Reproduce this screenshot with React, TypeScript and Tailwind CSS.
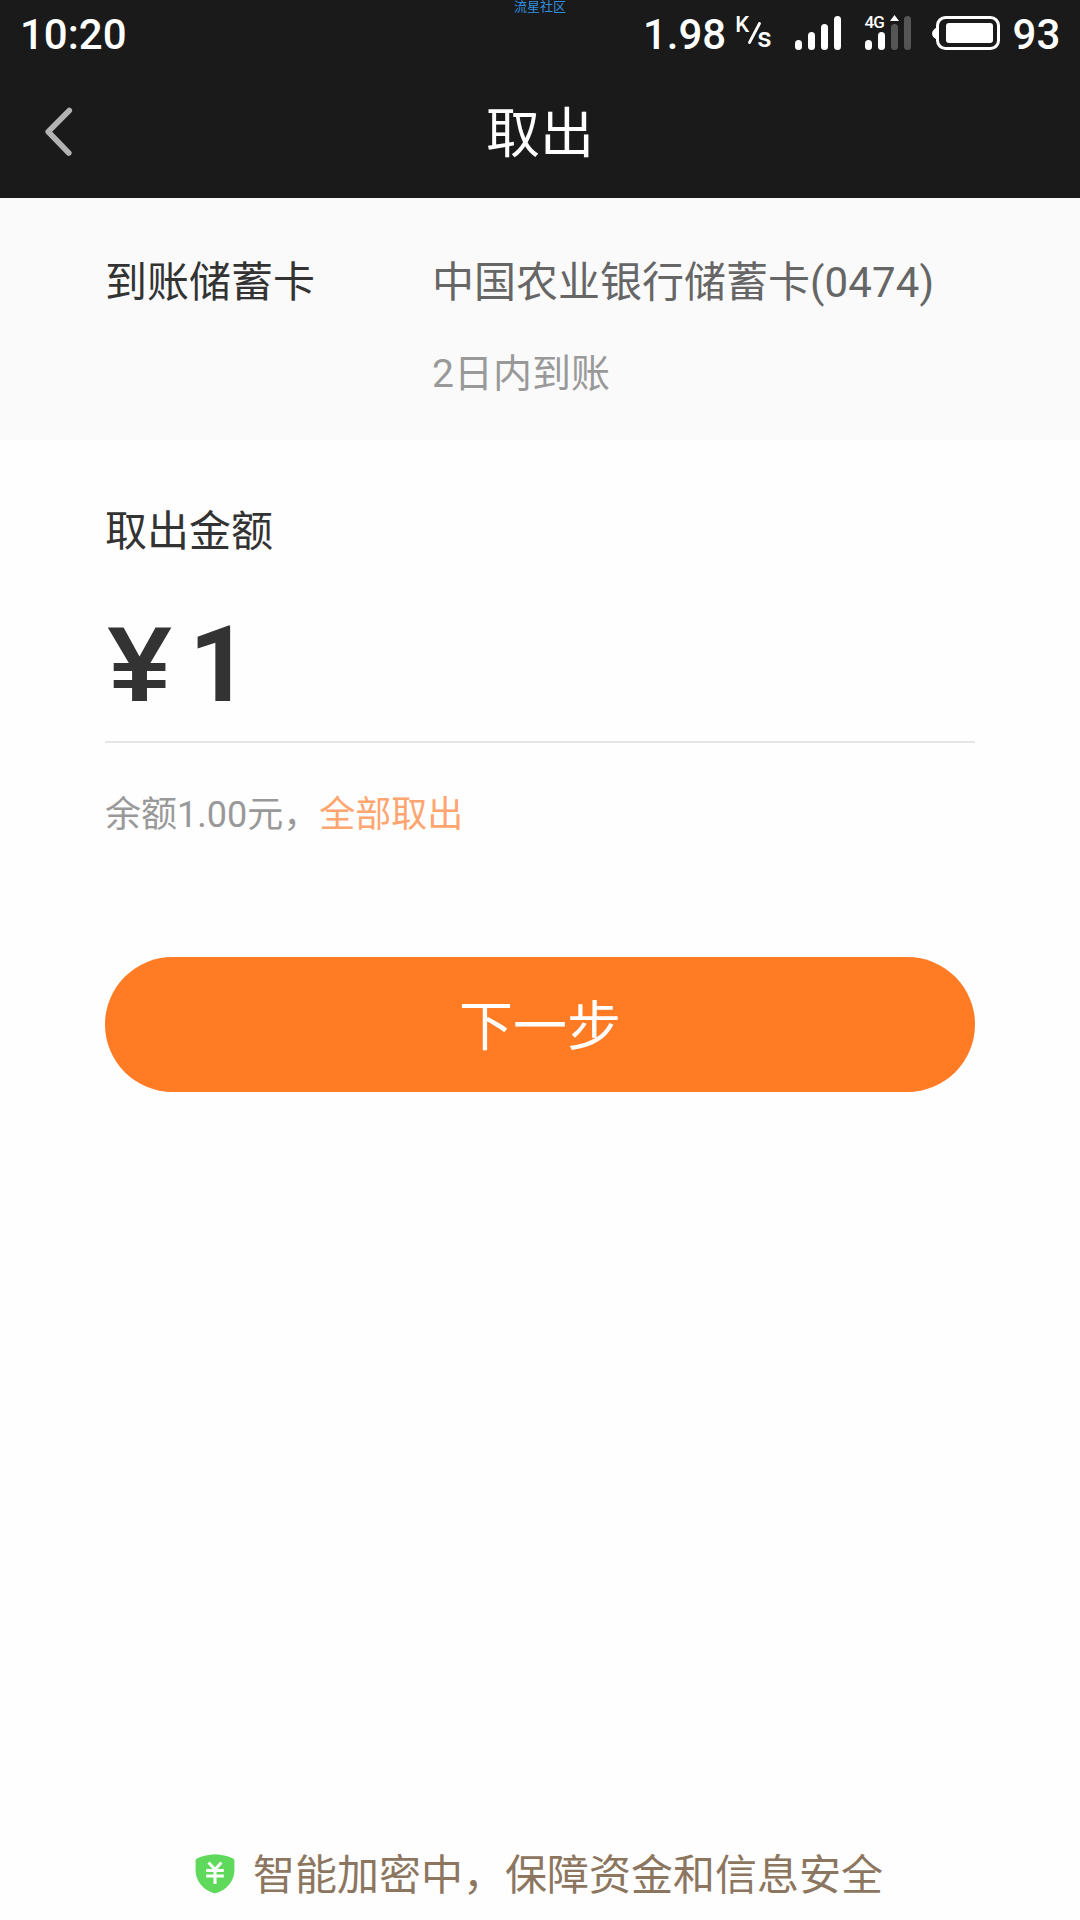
import React from 'react';

type IconProps = { className?: string };

// Four rounded bars, the second SIM only has two of them lit
const SignalBars: React.FC<IconProps & { lit: number }> = ({ className, lit }) => {
  const bars = [
    { x: 0, height: 10 },
    { x: 13, height: 18 },
    { x: 26, height: 26 },
    { x: 39, height: 34 },
  ];

  return (
    <svg className={className} width="47" height="34" viewBox="0 0 47 34">
      {bars.map((bar, index) => (
        <rect
          key={bar.x}
          x={bar.x}
          y={34 - bar.height}
          width="7"
          height={bar.height}
          rx="3.5"
          fill={index < lit ? '#ffffff' : '#555555'}
        />
      ))}
    </svg>
  );
};

const BatteryIcon: React.FC<IconProps> = ({ className }) => (
  <svg className={className} width="68" height="34" viewBox="0 0 68 34">
    <path d="M4.5 11.5C2 13 0 15 0 17.5S2 22 4.5 23.5Z" fill="#ffffff" />
    <rect x="5.5" y="1.5" width="61" height="31" rx="8" fill="none" stroke="#ffffff" strokeWidth="3" />
    <rect x="14" y="7" width="47" height="20" rx="3" fill="#ffffff" />
  </svg>
);

const BackIcon: React.FC<IconProps> = ({ className }) => (
  <svg className={className} width="28" height="50" viewBox="0 0 28 50">
    <path
      d="M24.3 3.5L3.2 24.7L23.8 46"
      fill="none"
      stroke="#b3b3b3"
      strokeWidth="5.6"
      strokeLinecap="round"
      strokeLinejoin="round"
    />
  </svg>
);

const ShieldIcon: React.FC<IconProps> = ({ className }) => (
  <svg className={className} width="40" height="40" viewBox="0 0 40 40">
    <path
      d="M20 0.3C26 0.5 33 2 38 4.6C39 5.2 39.4 6 39.4 7V17C39 28 31.5 35.5 21.5 39C20.4 39.4 19.4 39.4 18.3 39C8.5 35.5 1 28 0.6 17V7C0.6 6 1 5.2 2 4.6C7 2 14 0.5 20 0.3Z"
      fill="#5fd95c"
    />
    <path
      d="M13.6 8.6L20 15.6L26.4 8.6M11.2 16.6H28.8M11.2 22H28.8M20 15.6V30"
      fill="none"
      stroke="#ffffff"
      strokeWidth="3"
    />
  </svg>
);

const StatusBar: React.FC = () => (
  <div className="relative flex h-[66px] items-start font-[Roboto,sans-serif] text-[42px] font-medium leading-[70px] text-white">
    <span className="ml-5">10:20</span>
    <span className="absolute inset-x-0 top-0 text-center font-['Noto_Sans_CJK_SC',sans-serif] text-[13px] font-normal leading-[12px] text-[#2f8fdf]">
      流星社区
    </span>
    <div className="ml-auto flex items-start">
      <span>1.98</span>
      <span className="ml-[9px] mt-[14px] flex text-[22px] leading-[22px]">
        <span>K</span>
        <svg className="-ml-px mt-[8px]" width="13" height="22" viewBox="0 0 13 22">
          <path d="M11.5 1.5L1.5 20.5" stroke="#ffffff" strokeWidth="2.8" strokeLinecap="round" />
        </svg>
        <span className="-ml-1 mt-[13px] text-[28px]">s</span>
      </span>
      <SignalBars className="ml-[23px] mt-4" lit={4} />
      <div className="relative ml-[23px] mt-4">
        <SignalBars lit={2} />
        <span className="absolute left-0 -top-px text-[17px] leading-[14px] tracking-[-1px]">4G</span>
        <svg className="absolute -top-px left-[25px]" width="9" height="6" viewBox="0 0 9 6">
          <path d="M4.5 0L9 6H0Z" fill="#ffffff" />
        </svg>
      </div>
      <BatteryIcon className="ml-5 mt-4" />
      <span className="ml-[13px] mr-[19.7px]">93</span>
    </div>
  </div>
);

const NavBar: React.FC = () => (
  <div className="relative flex h-[132px] items-center justify-center pt-[6px]">
    <button type="button" className="absolute left-[45px] top-[41px]" aria-label="返回">
      <BackIcon />
    </button>
    <h1 className="text-[54px] leading-[54px] text-white">取出</h1>
  </div>
);

const CardInfo: React.FC = () => (
  <section className="flex h-[242px] bg-[#fafafa] pl-[105px] pt-[55px] text-[42px] leading-[60px]">
    <span className="w-[327px] text-[#333333]">到账储蓄卡</span>
    <div>
      <p className="text-[#666666]">
        中国农业银行储蓄卡<span className="tracking-[0.15px]">(0474)</span>
      </p>
      <p className="mt-[31px] text-[39px] text-[#999999]">2日内到账</p>
    </div>
  </section>
);

const AmountForm: React.FC = () => (
  <main className="flex flex-col px-[105px] pt-[62px]">
    <label className="text-[42px] leading-[60px] text-[#333333]">取出金额</label>
    <div className="mt-[38px] flex h-[143px] items-baseline border-b-2 border-[#e5e5e5] pt-[4px] font-bold leading-[124px] text-[#333333]">
      <span className="ml-px w-[83px] font-['Liberation_Mono',monospace] text-[112px]">¥</span>
      <span className="text-[105px]">1</span>
    </div>
    <p className="mt-[46px] text-[36px] leading-[52px] text-[#999999]">
      余额1.00元，<span className="text-[#ffa570]">全部取出</span>
    </p>
    <button
      type="button"
      className="mt-[116px] h-[135px] rounded-full bg-[#ff7b24] pt-[6px] text-[54px] leading-[54px] text-white"
    >
      下一步
    </button>
  </main>
);

export default function App() {
  return (
    <div className="flex h-[1920px] w-[1080px] flex-col overflow-hidden bg-[#fefefe] font-[Roboto,'Noto_Sans_CJK_SC',sans-serif]">
      <header className="h-[198px] bg-[#1a1a1a]">
        <StatusBar />
        <NavBar />
      </header>
      <CardInfo />
      <AmountForm />
      <footer className="mb-[14px] mt-auto flex items-center pl-[195px]">
        <ShieldIcon className="mb-1 mr-[18px]" />
        <span className="text-[42px] leading-[60px] text-[#8c7660]">智能加密中，保障资金和信息安全</span>
      </footer>
    </div>
  );
}
